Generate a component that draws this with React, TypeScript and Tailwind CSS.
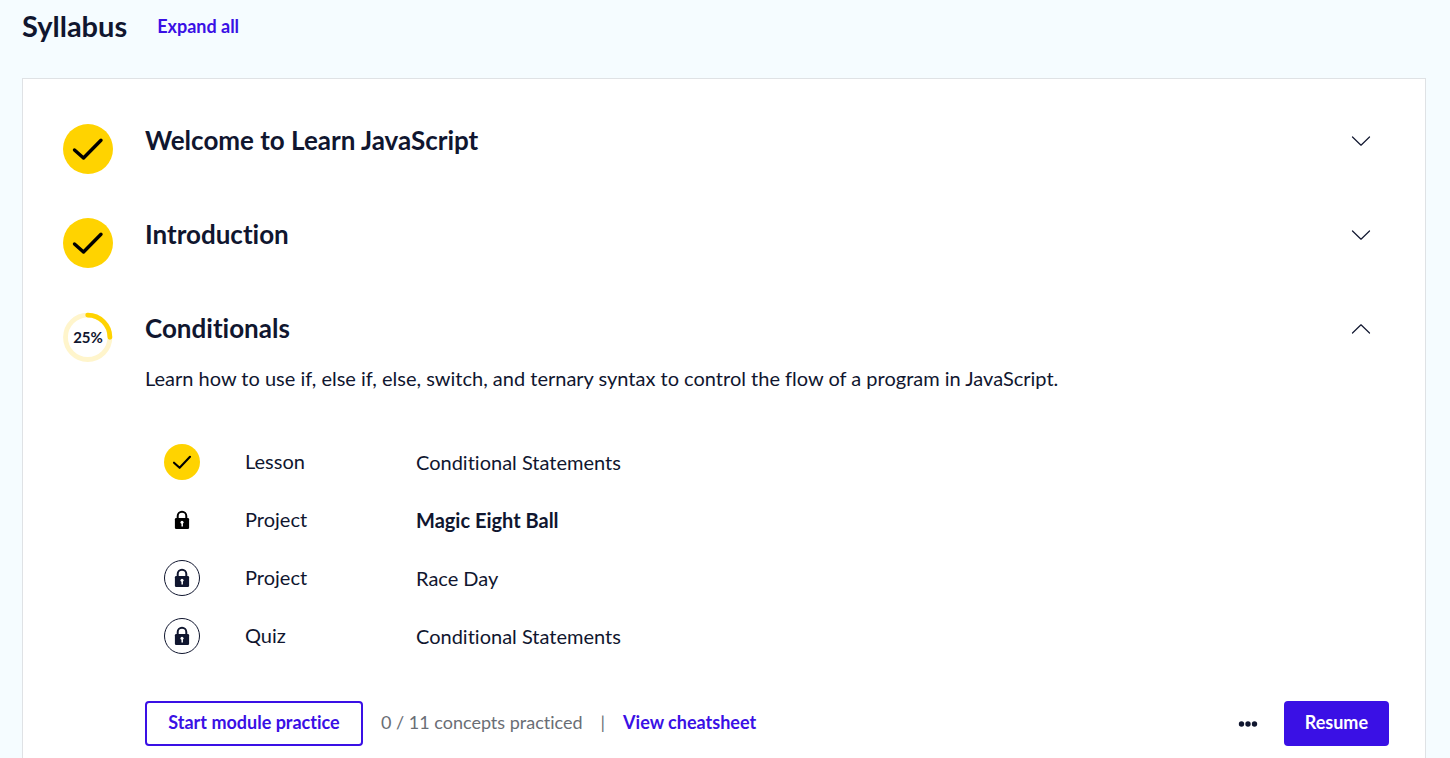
import { useState, type ReactNode } from "react";

function CheckBadge({ small = false }: { small?: boolean }) {
  return small ? (
    <svg className="size-9 shrink-0" viewBox="0 0 36 36" role="img" aria-label="Completed">
      <circle cx="18" cy="18" r="18" fill="#ffd300" />
      <path d="M10 18.7 15.6 23.800 26 12.800" fill="none" stroke="#000" strokeWidth="2.1" strokeLinecap="round" strokeLinejoin="round" />
    </svg>
  ) : (
    <svg className="size-[50px] shrink-0" viewBox="0 0 50 50" role="img" aria-label="Completed">
      <circle cx="25" cy="25" r="25" fill="#ffd300" />
      <path d="M11.5 26 20.5 34 38 16.3" fill="none" stroke="#000" strokeWidth="3.4" strokeLinecap="round" strokeLinejoin="round" />
    </svg>
  );
}

function ProgressRing({ percent }: { percent: number }) {
  return (
    <div className="grid size-[50px] shrink-0 place-items-center">
      <svg className="col-start-1 row-start-1 size-[50px]" viewBox="0 0 50 50" aria-hidden="true">
        <circle cx="24.7" cy="25.3" r="22.2" fill="none" stroke="#fff5cc" strokeWidth="4.8" />
        <circle
          cx="24.7"
          cy="25.3"
          r="22.2"
          fill="none"
          stroke="#ffd300"
          strokeWidth="4.8"
          strokeLinecap="round"
          pathLength="100"
          strokeDasharray={`${percent} 100`}
          transform="rotate(-90 24.7 25.3)"
        />
      </svg>
      <span className="col-start-1 row-start-1 text-[15px] leading-5 font-bold">{percent}%</span>
    </div>
  );
}

function LockBadge({ ring = true }: { ring?: boolean }) {
  const color = ring ? "#10162f" : "#000";
  return (
    <svg className="size-9 shrink-0" viewBox="0 0 36 36" role="img" aria-label="Locked">
      {ring && <circle cx="18" cy="18" r="17.5" fill="none" stroke="#10162f" />}
      <path d="M13.700 17V14a4.300 4.200 0 0 1 8.600 0v3" fill="none" stroke={color} strokeWidth="2" />
      <rect x="10.900" y="15.900" width="14.200" height="11.200" rx="1.300" fill={color} />
      <circle cx="18" cy="20.200" r="1.500" fill="#fff" />
      <path d="M18.200 20.500v4.100" fill="none" stroke="#fff" strokeWidth="1.500" />
    </svg>
  );
}

function Chevron({ up }: { up: boolean }) {
  return (
    <svg className="h-3 w-5 shrink-0" viewBox="0 0 20 12" fill="none" stroke="#10162f" strokeWidth="1.2" strokeLinecap="round" strokeLinejoin="round" aria-hidden="true">
      <path d={up ? "M1.500 11 10 2.800 18.500 11" : "M1.500 3 10 11.200 18.500 3"} />
    </svg>
  );
}

type ModuleProps = {
  title: string;
  badge: ReactNode;
  open: boolean;
  onToggle: () => void;
  children?: ReactNode;
};

function Module({ title, badge, open, onToggle, children }: ModuleProps) {
  return (
    <li className="flex items-start gap-8">
      {badge}
      <div className="min-w-0 flex-1">
        <h2>
          <button
            type="button"
            aria-expanded={open}
            onClick={onToggle}
            className="flex w-full items-center justify-between pr-[18px] text-left text-[26px] leading-8 font-bold"
          >
            {title}
            <Chevron up={open} />
          </button>
        </h2>
        {open && children}
      </div>
    </li>
  );
}

const lessons = [
  { kind: "Lesson", title: "Conditional Statements", state: "done" },
  { kind: "Project", title: "Magic Eight Ball", state: "next" },
  { kind: "Project", title: "Race Day", state: "locked" },
  { kind: "Quiz", title: "Conditional Statements", state: "locked" },
];

export default function App() {
  const [open, setOpen] = useState([false, false, true]);
  const toggle = (index: number) => setOpen(open.map((value, i) => (i === index ? !value : value)));

  return (
    <main className="min-h-screen bg-[#f5fcff] pr-6 pl-[22px] font-['Lato','Noto_Sans',sans-serif] text-[#10162f] [font-variant-ligatures:none]">
      <header className="flex items-center gap-[30px] pt-[7px] pb-[33px]">
        <h1 className="text-[29px] leading-[38px] font-bold">Syllabus</h1>
        <button type="button" onClick={() => setOpen([true, true, true])} className="text-lg leading-6 font-bold text-[#3a10e5]">
          Expand all
        </button>
      </header>

      <section className="min-h-[calc(100vh-78px)] border border-b-0 border-[#dfe2e5] bg-white pt-[45px] pr-9 pl-10">
        <ul className="flex flex-col gap-11">
          <Module title="Welcome to Learn JavaScript" badge={<CheckBadge />} open={open[0]} onToggle={() => toggle(0)} />
          <Module title="Introduction" badge={<CheckBadge />} open={open[1]} onToggle={() => toggle(1)} />
          <Module title="Conditionals" badge={<ProgressRing percent={25} />} open={open[2]} onToggle={() => toggle(2)}>
            <p className="mt-5 text-[20px] leading-7">
              Learn how to use if, else if, else, switch, and ternary syntax to control the flow of a program in JavaScript.
            </p>
            <ul className="mt-[52px] flex flex-col gap-[22px] pl-[19px] text-[20px] leading-7">
              {lessons.map((lesson, index) => (
                <li key={index} className="grid grid-cols-[36px_126px_1fr] items-center gap-x-[45px]">
                  {lesson.state === "done" ? <CheckBadge small /> : <LockBadge ring={lesson.state === "locked"} />}
                  <span className="pb-0.5">{lesson.kind}</span>
                  <a href="#" className={lesson.state === "next" ? "font-bold" : ""}>
                    {lesson.title}
                  </a>
                </li>
              ))}
            </ul>
            <div className="mt-[47px] flex items-center justify-between text-lg leading-6">
              <div className="flex items-center">
                <button type="button" className="h-[45px] min-w-[218px] rounded border-2 border-[#3a10e5] px-[18px] pb-1 font-bold text-[#3a10e5]">
                  Start module practice
                </button>
                <span className="ml-[18px] pb-1 text-[#6a6e75]">0 / 11 concepts practiced</span>
                <span className="mx-[18px] pb-1 text-[#6a6e75]">|</span>
                <a href="#" className="pb-1 font-bold text-[#3a10e5]">
                  View cheatsheet
                </a>
              </div>
              <div className="flex items-center gap-[26px]">
                <button type="button" aria-label="More options">
                  <svg className="h-[6px] w-5" viewBox="0 0 20 6" fill="#10162f" aria-hidden="true">
                    <circle cx="3.500" cy="3" r="2.700" />
                    <circle cx="10" cy="3" r="2.700" />
                    <circle cx="16.500" cy="3" r="2.700" />
                  </svg>
                </button>
                <button type="button" className="h-[45px] rounded bg-[#3a10e5] px-[21px] pb-1 font-bold text-white">
                  Resume
                </button>
              </div>
            </div>
          </Module>
        </ul>
      </section>
    </main>
  );
}
